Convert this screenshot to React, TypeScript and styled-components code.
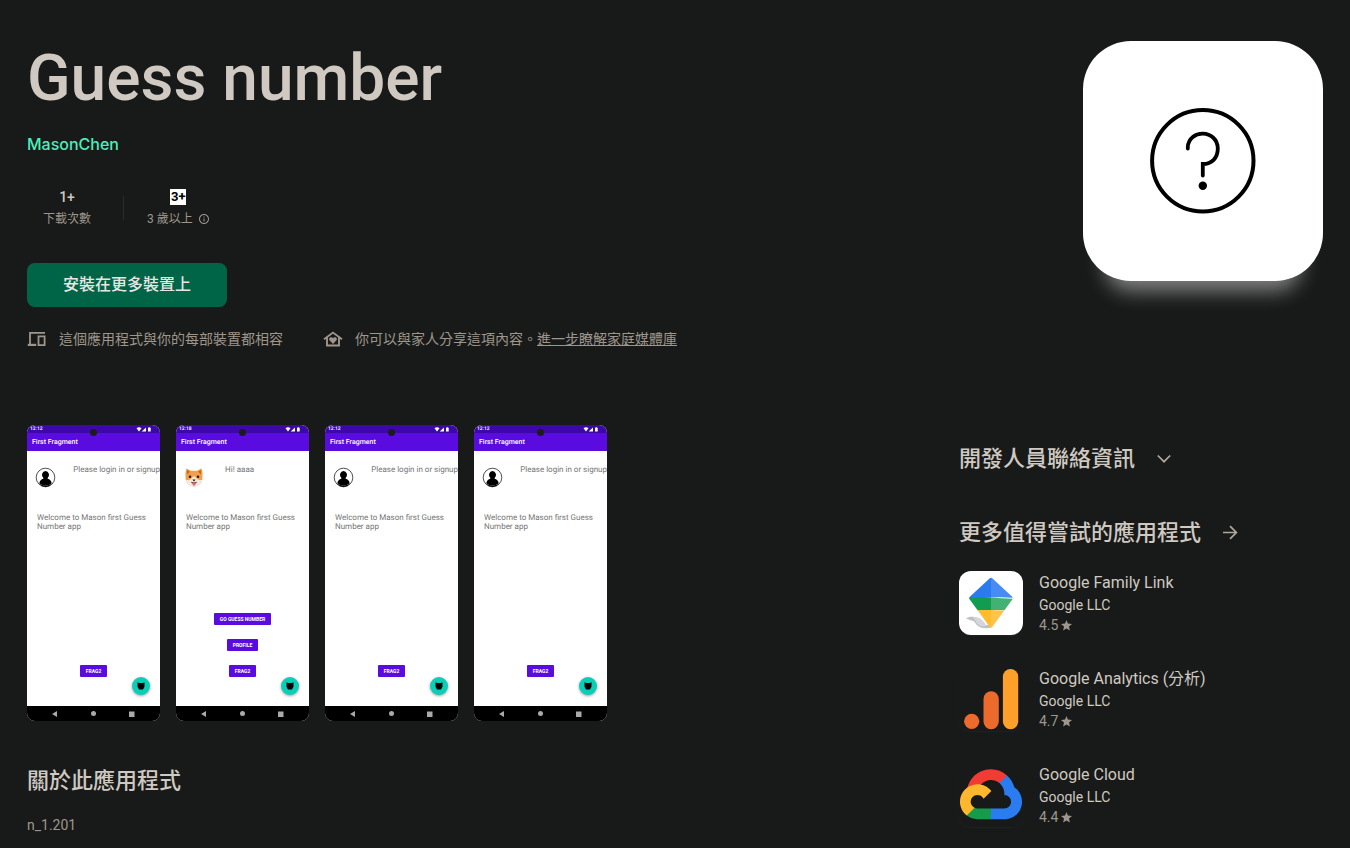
import React from "react";
import styled, { createGlobalStyle } from "styled-components";

const color = {
  page: "#181a19",
  text: "#cfc9c2",
  muted: "#9e968c",
  accent: "#4eedbd",
  install: "#006547",
  appBar: "#5a0ce0",
  statusBar: "#3c08aa",
};

const GlobalStyle = createGlobalStyle`
  * { box-sizing: border-box; }
  body {
    margin: 0;
    background: ${color.page};
    color: ${color.text};
    font-family: Roboto, "Noto Sans CJK TC", sans-serif;
    font-size: 14px;
    line-height: 20px;
  }
  h1, h2, p, ul { margin: 0; padding: 0; }
  button { font: inherit; border: 0; padding: 0; background: none; color: inherit; cursor: pointer; }
  a { color: inherit; text-decoration: none; }
  svg { display: block; flex: none; }
`;

const Page = styled.main`
  padding: 41px 27px 0;
`;

const Header = styled.header`
  display: flex;
  justify-content: space-between;
  align-items: flex-start;
  gap: 32px;
`;

const Title = styled.h1`
  font-size: 64px;
  line-height: 76px;
  font-weight: 500;
`;

const Developer = styled.a`
  display: block;
  margin-top: 15px;
  font-family: Inter, sans-serif;
  font-size: 16px;
  line-height: 24px;
  font-weight: 500;
  color: ${color.accent};
`;

const Stats = styled.div`
  display: flex;
  align-items: center;
  margin-top: 31px;
`;

const Stat = styled.div`
  display: flex;
  flex-direction: column;
  align-items: center;
  gap: 2px;
  padding: 0 32px 0 16px;
`;

const StatDivider = styled.span`
  width: 1px;
  height: 24px;
  margin-right: 7px;
  background: #2b2d2c;
`;

const StatValue = styled.div`
  display: flex;
  align-items: center;
  height: 20px;
  font-weight: 500;
`;

const StatLabel = styled.div`
  display: flex;
  align-items: center;
  gap: 5px;
  font-size: 12px;
  line-height: 20px;
  color: ${color.muted};
`;

const RatingBadge = styled.span`
  width: 16px;
  height: 16px;
  background: #fff;
  color: #000;
  font-size: 13px;
  line-height: 16px;
  font-weight: 700;
  text-align: center;
`;

const InstallButton = styled.button`
  display: block;
  width: 200px;
  height: 44px;
  margin-top: 34px;
  border-radius: 8px;
  background: ${color.install};
  color: #e8e6e3;
  font-size: 16px;
  font-weight: 500;
`;

const Notes = styled.div`
  display: flex;
  flex-wrap: wrap;
  gap: 8px 40px;
  margin-top: 22px;
  color: ${color.muted};
`;

const Note = styled.div`
  display: flex;
  align-items: center;
  gap: 12px;

  a { text-decoration: underline; }
`;

const AppIcon = styled.div`
  flex: none;
  width: 240px;
  height: 240px;
  border-radius: 48px;
  background: #fff;
  box-shadow: 0 32px 20px -22px rgba(255, 255, 255, 0.46);
`;

const Columns = styled.div`
  display: flex;
  justify-content: space-between;
  align-items: flex-start;
  gap: 32px;
  margin-top: 76px;
`;

const MainColumn = styled.section`
  flex: 1;
  min-width: 0;
`;

const SideColumn = styled.aside`
  flex: none;
  width: 364px;
  padding-top: 20px;
`;

const Screens = styled.div`
  display: flex;
  gap: 16px;
  overflow: hidden;
`;

const Phone = styled.div`
  display: flex;
  flex-direction: column;
  flex: none;
  position: relative;
  width: 133px;
  height: 296px;
  border-radius: 8px;
  overflow: hidden;
  background: #fff;
  color: #757575;
  font-size: 8px;
  line-height: 9px;
  text-rendering: geometricPrecision;
`;

const StatusBar = styled.div`
  display: flex;
  align-items: center;
  justify-content: space-between;
  height: 8px;
  padding: 0 8px 0 3px;
  background: ${color.statusBar};
  color: #fff;
  font-size: 5px;
  line-height: 8px;
  font-weight: 500;
`;

const Camera = styled.span`
  position: absolute;
  top: 4px;
  left: 63px;
  width: 7px;
  height: 7px;
  border-radius: 50%;
  background: #1c1c1c;
`;

const PhoneAppBar = styled.div`
  height: 18px;
  padding-left: 5px;
  background: ${color.appBar};
  color: #fff;
  font-size: 7px;
  line-height: 18px;
  font-weight: 500;
`;

const PhoneBody = styled.div`
  display: flex;
  flex-direction: column;
  flex: 1;
  padding: 14px 0 29px;
`;

const Profile = styled.div`
  display: flex;
  height: 48px;
  padding-left: 8px;
  white-space: nowrap;

  svg { margin: 2px 0 0; }

  /* The gap beside the avatar gives way to a long greeting. */
  &::before {
    content: "";
    flex: 0 1 20px;
    order: 1;
  }
`;

const Greeting = styled.span`
  flex: none;
  order: 2;
`;

const Welcome = styled.p`
  padding: 0 10px;
`;

const PhoneActions = styled.div`
  display: flex;
  flex-direction: column;
  align-items: center;
  gap: 14px;
  margin-top: auto;
`;

const PhoneButton = styled.button`
  height: 12px;
  padding: 0 6px;
  border-radius: 1px;
  background: ${color.appBar};
  color: #fff;
  font-size: 5px;
  line-height: 12px;
  font-weight: 700;
`;

const Fab = styled.button`
  position: absolute;
  right: 10px;
  bottom: 26px;
  display: grid;
  place-items: center;
  width: 18px;
  height: 18px;
  border-radius: 50%;
  background: #08cfb8;
  box-shadow: 0 1px 3px rgba(0, 0, 0, 0.4);
`;

const NavBar = styled.div`
  display: flex;
  align-items: center;
  justify-content: space-between;
  height: 15px;
  padding: 0 25px;
  background: #000;
`;

const Heading = styled.h2`
  display: flex;
  align-items: center;
  gap: 17px;
  font-size: 22px;
  line-height: 28px;
  font-weight: 500;

  svg { color: #b0a89e; }
`;

const About = styled.div`
  display: flex;
  flex-direction: column;
  gap: 20px;
  margin-top: 46px;

  p { color: ${color.muted}; }
`;

const SideHeadings = styled.div`
  display: flex;
  flex-direction: column;
  gap: 46px;
`;

const AppList = styled.ul`
  display: flex;
  flex-direction: column;
  gap: 32px;
  margin-top: 24px;
  list-style: none;
`;

const AppLink = styled.a`
  display: flex;
  gap: 16px;
`;

const Tile = styled.div<{ $fill?: string }>`
  flex: none;
  width: 64px;
  height: 64px;
  border-radius: 12px;
  overflow: hidden;
  background: ${(p) => p.$fill ?? "transparent"};
  box-shadow: 0 1px 2px rgba(255, 255, 255, 0.04);
`;

const AppName = styled.div`
  font-size: 16px;
  line-height: 24px;
`;

const Rating = styled.div`
  display: flex;
  align-items: center;
  gap: 3px;
  color: ${color.muted};
`;

const DevicesIcon = () => (
  <svg width="20" height="20" viewBox="0 0 20 20" fill="none" stroke="currentColor" strokeWidth="1.8">
    <path d="M18 3.900H3V15.500" />
    <path d="M.8 15.900H9.200" strokeWidth="2.200" />
    <path d="M11.500 7.300h6.100v8.800h-6.100z" />
  </svg>
);

const HouseHeartIcon = () => (
  <svg width="20" height="20" viewBox="0 0 20 20" fill="none" stroke="currentColor" strokeWidth="1.9">
    <path d="M1 10.200 10 3.600l9 6.600" />
    <path d="M4 8.200v8.300h12V8.200" />
    <path
      d="M10 14.900 6.700 11.600c-1.800-2.200 1-4.800 3.300-2.600 2.300-2.200 5.100.4 3.300 2.600z"
      fill="currentColor"
      stroke="none"
    />
  </svg>
);

const InfoIcon = () => (
  <svg width="12" height="12" viewBox="0 0 24 24" fill="currentColor">
    <path d="M11 7h2v2h-2zm0 4h2v6h-2zm1-9C6.48 2 2 6.48 2 12s4.48 10 10 10 10-4.48 10-10S17.52 2 12 2m0 18c-4.41 0-8-3.59-8-8s3.59-8 8-8 8 3.59 8 8-3.59 8-8 8" />
  </svg>
);

const ChevronIcon = () => (
  <svg width="24" height="24" viewBox="0 0 24 24" fill="none" stroke="currentColor" strokeWidth="1.7">
    <path d="m5.800 8.500 6.200 6.200 6.200-6.200" />
  </svg>
);

const ArrowIcon = () => (
  <svg width="24" height="24" viewBox="0 0 24 24" fill="none" stroke="currentColor" strokeWidth="1.7">
    <path d="M5 11.500h13M12 5.100l6.400 6.400-6.400 6.400" />
  </svg>
);

const StarIcon = () => (
  <svg width="11" height="11" viewBox="0 0 24 24" fill="currentColor">
    <path d="M12 18.3 19.4 23l-2-8.8L24 8.6l-8.900-.8L12 0 8.900 7.800 0 8.600l6.600 5.600-2 8.800z" />
  </svg>
);

const QuestionIcon = () => (
  <svg width="240" height="240" viewBox="0 0 240 240" fill="none" stroke="#000" strokeLinecap="round">
    <circle cx="119.8" cy="119.7" r="50.7" strokeWidth="4" />
    <path d="M104.8 107.5v-1.500c1-18 29.500-18 30 1.500 0 9.500-6 15.500-15 15.500v11.500" strokeWidth="3.8" />
    <circle cx="119.8" cy="144.8" r="4.200" fill="#000" stroke="none" />
  </svg>
);

const PersonAvatar = () => (
  <svg width="21" height="21" viewBox="0 0 21 21">
    <circle cx="10.500" cy="10.500" r="9.300" fill="#fff" stroke="#222" strokeWidth=".8" />
    <path d="M10.500 4a3.500 3.800 0 0 1 2.200 6.700v1c2 .6 3.600 1.600 4 4.500a9 9 0 0 1-12.400 0c.4-2.900 2-3.900 4-4.500v-1A3.500 3.800 0 0 1 10.500 4z" />
    <path d="M4.300 16.200a9 9 0 0 0 12.400 0l-2 2.600a9 9 0 0 1-8.400 0z" />
  </svg>
);

const ShibaAvatar = () => (
  <svg width="21" height="21" viewBox="0 0 21 21">
    <path d="M2.500 1.500 7 3.800h6l4.500-2.300c1.200 3 1.200 6 .9 8.500.6 5-3.400 9.500-8.400 9.500S1 15 1.600 10c-.3-2.500-.3-5.500.9-8.500z" fill="#f0a04b" />
    <path d="m3.200 3 2.600 1.800L3 7.500zM16.800 3l-2.600 1.800L17 7.500z" fill="#b5652c" />
    <path d="M1.900 13c3 0 5.200-.4 6.300-2.600L10 9l1.800 1.400c1.100 2.200 3.300 2.600 6.300 2.600-.6 3.900-4 6.500-8.100 6.500S2.500 16.900 1.900 13z" fill="#f6e9dc" />
    <circle cx="6" cy="9.800" r="1.300" fill="#2b1a14" />
    <circle cx="14" cy="9.800" r="1.300" fill="#2b1a14" />
    <path d="M8.300 12.500h3.400L10 14.500z" fill="#2b1a14" />
    <path d="M7 14.700c2 1 4 1 6 0-.4 1.200-1 1.700-1.600 1.800h-2.800C8 16.400 7.400 15.900 7 14.700z" fill="#4a2a22" />
    <path d="M8.700 15.800h2.600v1.600c0 1.600-2.600 1.600-2.600 0z" fill="#ee5a68" />
  </svg>
);

const CatIcon = () => (
  <svg width="8" height="8" viewBox="0 0 8 8">
    <path d="M.5.300 2.200 1h3.600L7.500.300V4.800L6 7.400H2L.5 4.800z" />
  </svg>
);

const SignalIcons = () => (
  <svg width="16" height="5" viewBox="0 0 16 5" fill="#fff">
    <path d="M.5 1.200q2.500-1.800 5 0L3 4.500zM10 .4v4.100H5.700zM12 .8h.7V.2h1.200v.6h.8v3.700H12z" />
  </svg>
);

const FamilyLinkLogo = () => (
  <svg width="64" height="64" viewBox="0 0 64 64">
    <path d="M7 47.500c3-2.400 8-2 10.500-.5 3.500 2 4 8.500 8 7.500 1.700-.4 3-1 4.500-.5l2 2.600c-4 1-10 .7-13-1.600-3-2.500-3.500-6-7-5.500L8.500 48z" fill="#bdc1c6" />
    <path d="M14 46.200c5-1 9 1.500 12 6.300l1.500 2C21 57.500 17.500 52 16 49z" fill="#d3d6da" />
    <clipPath id="kite">
      <path d="M30.800 7.200q1.200-1 2.400 0l20 18.600q1 1.200.2 2.500L33.200 56q-1.200 1.600-2.400 0L10.600 28.300q-.8-1.300.2-2.500z" />
    </clipPath>
    <g clipPath="url(#kite)">
      <path d="M0 0h64v28q-16-2.500-32-1.500T0 28z" fill="#2b7bf0" />
      <path d="M0 28q16-2.500 32-1.500T64 28v13q-16-2.500-32-2T0 41z" fill="#109d4f" />
      <path d="M0 41q16-2.500 32-2t32 2v23H0z" fill="#ffbc2c" />
      <path d="M32 0h32v64H32z" fill="#fff" opacity=".13" />
      <path d="M32 26.500q16-.500 32 1.500v13q-16-2.500-32-2z" fill="#fff" opacity=".1" />
    </g>
  </svg>
);

const AnalyticsLogo = () => (
  <svg width="64" height="64" viewBox="0 0 64 64">
    <circle cx="12.700" cy="54.300" r="7.600" fill="#ec6a2c" />
    <rect x="24.500" y="24.300" width="15.300" height="37.900" rx="7.600" fill="#ec6a2c" />
    <rect x="43.900" y="2" width="15.300" height="60.200" rx="7.600" fill="#ffa02b" />
  </svg>
);

const CloudLogo = () => (
  <svg width="64" height="64" viewBox="-4 -26 264 264">
    <path fill="#f23c33" d="m170.250 56.820 22.250-22.250 1.490-9.370C153.440-11.680 88.980-7.500 52.420 33.920 42.270 45.420 34.730 59.760 30.720 74.570l7.970-1.120 44.500-7.340 3.440-3.510c19.800-21.750 53.270-24.670 76.130-6.170z" />
    <path fill="#2a7cf0" d="M224.200 73.920c-5.110-18.840-15.610-35.770-30.210-48.720l-31.230 31.230c13.190 10.770 20.700 27.010 20.370 44.040v5.540c15.360 0 27.800 12.450 27.800 27.800 0 15.350-12.440 27.480-27.800 27.480h-55.670l-5.460 5.930v33.340l5.460 5.240h55.670c39.930.3 72.560-31.500 72.870-71.430.190-24.200-11.750-46.890-31.800-60.450z" />
    <path fill="#149c4b" d="M71.870 205.800h55.590v-44.510H71.870c-3.960 0-7.800-.850-11.400-2.500l-7.890 2.420-22.310 22.250-1.940 7.540c12.560 9.490 27.790 14.870 43.540 14.800z" />
    <path fill="#ffb72d" d="M71.870 61.430C31.940 61.660-.24 94.230 0 134.160c.13 22.300 10.550 43.290 28.330 56.840l32.240-32.250c-13.990-6.320-20.190-22.790-13.870-36.780 6.320-13.990 22.790-20.200 36.780-13.880 6.170 2.790 11.090 7.710 13.880 13.880l32.240-32.250c-13.720-17.930-35.030-28.400-57.730-28.290z" />
  </svg>
);

interface ScreenProps {
  time: string;
  greeting: string;
  avatar: React.ReactNode;
  actions: string[];
}

const Screen = ({ time, greeting, avatar, actions }: ScreenProps) => (
  <Phone>
    <StatusBar>
      <span>{time}</span>
      <SignalIcons />
    </StatusBar>
    <PhoneAppBar>First Fragment</PhoneAppBar>
    <Camera />
    <PhoneBody>
      <Profile>
        {avatar}
        <Greeting>{greeting}</Greeting>
      </Profile>
      <Welcome>Welcome to Mason first Guess Number app</Welcome>
      <PhoneActions>
        {actions.map((label) => (
          <PhoneButton key={label}>{label}</PhoneButton>
        ))}
      </PhoneActions>
    </PhoneBody>
    <Fab aria-label="Cat">
      <CatIcon />
    </Fab>
    <NavBar>
      <svg width="5" height="6" viewBox="0 0 5 6" fill="#aaa"><path d="M5 0v6L0 3z" /></svg>
      <svg width="5" height="5" viewBox="0 0 5 5" fill="#aaa"><circle cx="2.5" cy="2.5" r="2.5" /></svg>
      <svg width="6" height="6" viewBox="0 0 6 6" fill="#aaa"><path d="M0 .5h5.500V6H0z" /></svg>
    </NavBar>
  </Phone>
);

const signedOut: ScreenProps = {
  time: "12:12",
  greeting: "Please login in or signup",
  avatar: <PersonAvatar />,
  actions: ["FRAG2"],
};

const screens: ScreenProps[] = [
  signedOut,
  {
    time: "12:18",
    greeting: "Hi! aaaa",
    avatar: <ShibaAvatar />,
    actions: ["GO GUESS NUMBER", "PROFILE", "FRAG2"],
  },
  signedOut,
  signedOut,
];

const apps = [
  { name: "Google Family Link", rating: "4.5", logo: <FamilyLinkLogo />, fill: "#fff" },
  { name: "Google Analytics (分析)", rating: "4.7", logo: <AnalyticsLogo /> },
  { name: "Google Cloud", rating: "4.4", logo: <CloudLogo /> },
];

export default function App() {
  return (
    <Page lang="zh-Hant">
      <GlobalStyle />
      <Header>
        <div>
          <Title>Guess number</Title>
          <Developer href="#developer">MasonChen</Developer>
          <Stats>
            <Stat>
              <StatValue>1+</StatValue>
              <StatLabel>下載次數</StatLabel>
            </Stat>
            <StatDivider />
            <Stat>
              <StatValue>
                <RatingBadge>3+</RatingBadge>
              </StatValue>
              <StatLabel>
                3 歲以上 <InfoIcon />
              </StatLabel>
            </Stat>
          </Stats>
          <InstallButton>安裝在更多裝置上</InstallButton>
          <Notes>
            <Note>
              <DevicesIcon />
              <span>這個應用程式與你的每部裝置都相容</span>
            </Note>
            <Note>
              <HouseHeartIcon />
              <span>
                你可以與家人分享這項內容。<a href="#family">進一步瞭解家庭媒體庫</a>
              </span>
            </Note>
          </Notes>
        </div>
        <AppIcon>
          <QuestionIcon />
        </AppIcon>
      </Header>
      <Columns>
        <MainColumn>
          <Screens>
            {screens.map((screen, i) => (
              <Screen key={i} {...screen} />
            ))}
          </Screens>
          <About>
            <Heading>關於此應用程式</Heading>
            <p>n_1.201</p>
          </About>
        </MainColumn>
        <SideColumn>
          <SideHeadings>
            <Heading>
              開發人員聯絡資訊
              <button aria-label="展開">
                <ChevronIcon />
              </button>
            </Heading>
            <Heading>
              更多值得嘗試的應用程式
              <a href="#more" aria-label="更多">
                <ArrowIcon />
              </a>
            </Heading>
          </SideHeadings>
          <AppList>
            {apps.map((app) => (
              <li key={app.name}>
                <AppLink href="#app">
                  <Tile $fill={app.fill}>{app.logo}</Tile>
                  <div>
                    <AppName>{app.name}</AppName>
                    <div>Google LLC</div>
                    <Rating>
                      {app.rating} <StarIcon />
                    </Rating>
                  </div>
                </AppLink>
              </li>
            ))}
          </AppList>
        </SideColumn>
      </Columns>
    </Page>
  );
}
